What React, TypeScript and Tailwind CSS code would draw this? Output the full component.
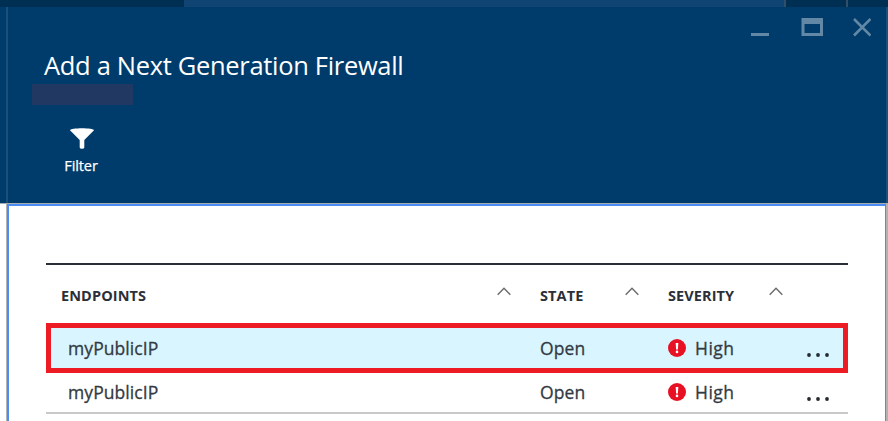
import React from "react";

function SortCaret() {
  return (
    <svg className="block h-[9px] w-[14px]" viewBox="0 0 14 9" fill="none" stroke="#6b6b6b" strokeWidth="1.4">
      <path d="M.7 7.700 7 1.200l6.300 6.500" />
    </svg>
  );
}

function AlertIcon() {
  return (
    <svg className="block h-[18px] w-[18px]" viewBox="0 0 18 18">
      <circle cx="9" cy="9" r="9" fill="#e81123" />
      <path d="M7.700 4h2.600l-.4 6.500H8.100z" fill="#fff" />
      <circle cx="9" cy="12.900" r="1.300" fill="#fff" />
    </svg>
  );
}

function Dots() {
  return (
    <svg className="block h-[4px] w-[22px]" viewBox="0 0 22 4" fill="#252a31">
      <circle cx="2" cy="2" r="1.900" />
      <circle cx="11" cy="2" r="1.900" />
      <circle cx="20" cy="2" r="1.900" />
    </svg>
  );
}

function Row({ name, state, severity }: { name: string; state: string; severity: string }) {
  return (
    <div className="flex h-10 w-full items-start pt-[3px] text-[17.500px] leading-[32px] tracking-[0.080px] text-[#343a42] [-webkit-text-stroke:0.3px_#343a42]">
      <div className="w-[472px] shrink-0 pt-px">{name}</div>
      <div className="w-[128px] shrink-0 pt-px">{state}</div>
      <div className="flex w-[139px] shrink-0">
        <div className="mr-[9px] pt-[8px]"><AlertIcon /></div>
        <div className="pt-px tracking-[0.500px]">{severity}</div>
      </div>
      <div className="pt-[22px]"><Dots /></div>
    </div>
  );
}

export default function App() {
  return (
    <div className="flex h-[421px] w-[888px] flex-col overflow-hidden bg-white font-['Open_Sans','Noto_Sans',sans-serif]">
      <div className="flex h-[7px] shrink-0 bg-[#002f54]">
        <div className="w-[184px]" />
        <div className="w-[600px] bg-[#104573]" />
        <div className="w-[2px] bg-[#334f66]" />
        <div className="w-[60px]" />
        <div className="w-[2px] bg-[#334f66]" />
      </div>

      <header className="flex h-[196px] shrink-0 bg-[#003c6b]">
        <div className="ml-[6px] w-[2px] shrink-0 bg-[#1a507a]" />
        <div className="flex flex-1 flex-col">
          <div className="flex h-[34px] justify-end pr-[15px] pt-[10px] text-[#6388a6]">
            <svg className="h-[20px] w-[120px]" viewBox="0 0 120 20" fill="none">
              <path d="M0 17.500h18" stroke="currentColor" strokeWidth="3" />
              <path fillRule="evenodd" d="M50.500 1H72v18H50.500zM53.500 7v9H69V7z" fill="currentColor" />
              <path d="m103 2 16.500 16.500M119.500 2 103 18.500" stroke="currentColor" strokeWidth="2.600" />
            </svg>
          </div>
          <h1 className="h-[43px] whitespace-nowrap pl-[36px] pt-[6px] text-[25.500px] leading-[36px] tracking-[-0.320px] text-white">
            Add a Next Generation Firewall
          </h1>
          <div className="ml-[24px] h-[21px] w-[101px] bg-[#213863]" />
          <div className="ml-[49px] mt-[23px] flex w-[50px] flex-col items-center">
            <svg className="block h-[21px] w-[24px]" viewBox="0 0 24 21" fill="#fff">
              <path d="M0 2.300C0-.5 24-.5 24 2.300L14.300 12v7.500q0 1.300-2.300 1.300T9.700 19.500V12z" />
            </svg>
            <div className="mt-[7px] -ml-[2px] text-[14.500px] leading-[20px] tracking-[-0.100px] text-white [-webkit-text-stroke:0.25px_white]">Filter</div>
          </div>
        </div>
        <div className="w-[2px] bg-[#1a507a]" />
      </header>

      <div className="h-px shrink-0 bg-[#a8adb0]" />
      <div className="flex min-h-0 flex-1">
        <div className="ml-[6px] w-px bg-[#b2b2b2]" />
        <main className="flex w-[879px] flex-col border-l-2 border-r border-t-2 border-[#4b8df5] bg-white pl-[37px] pt-[57px]">
          <section className="w-[802px]">
            <div className="flex h-[60px] border-t-2 border-[#2b3038] pl-[15px] pt-[20px] text-[14.500px] font-bold leading-[22px] tracking-[0.100px] text-[#2b3038]">
              <div className="flex w-[479px] justify-between pr-[29px]">
                <span>ENDPOINTS</span><div className="pt-[2px]"><SortCaret /></div>
              </div>
              <div className="flex w-[128px] justify-between pr-[29px]">
                <span>STATE</span><div className="pt-[2px]"><SortCaret /></div>
              </div>
              <div className="flex w-[115px] justify-between">
                <span>SEVERITY</span><div className="pt-[2px]"><SortCaret /></div>
              </div>
            </div>
            <div className="h-[50px] border-[5px] border-[#ed1c24] bg-[#d9f5ff] pl-[17px]">
              <Row name="myPublicIP" state="Open" severity="High" />
            </div>
            <div className="h-[42px] border-b-2 border-[#c9c9c9] pl-[22px]">
              <div className="-mt-px"><Row name="myPublicIP" state="Open" severity="High" /></div>
            </div>
          </section>
        </main>
        <div className="w-[2px] bg-[#b2b2b2]" />
      </div>
    </div>
  );
}
